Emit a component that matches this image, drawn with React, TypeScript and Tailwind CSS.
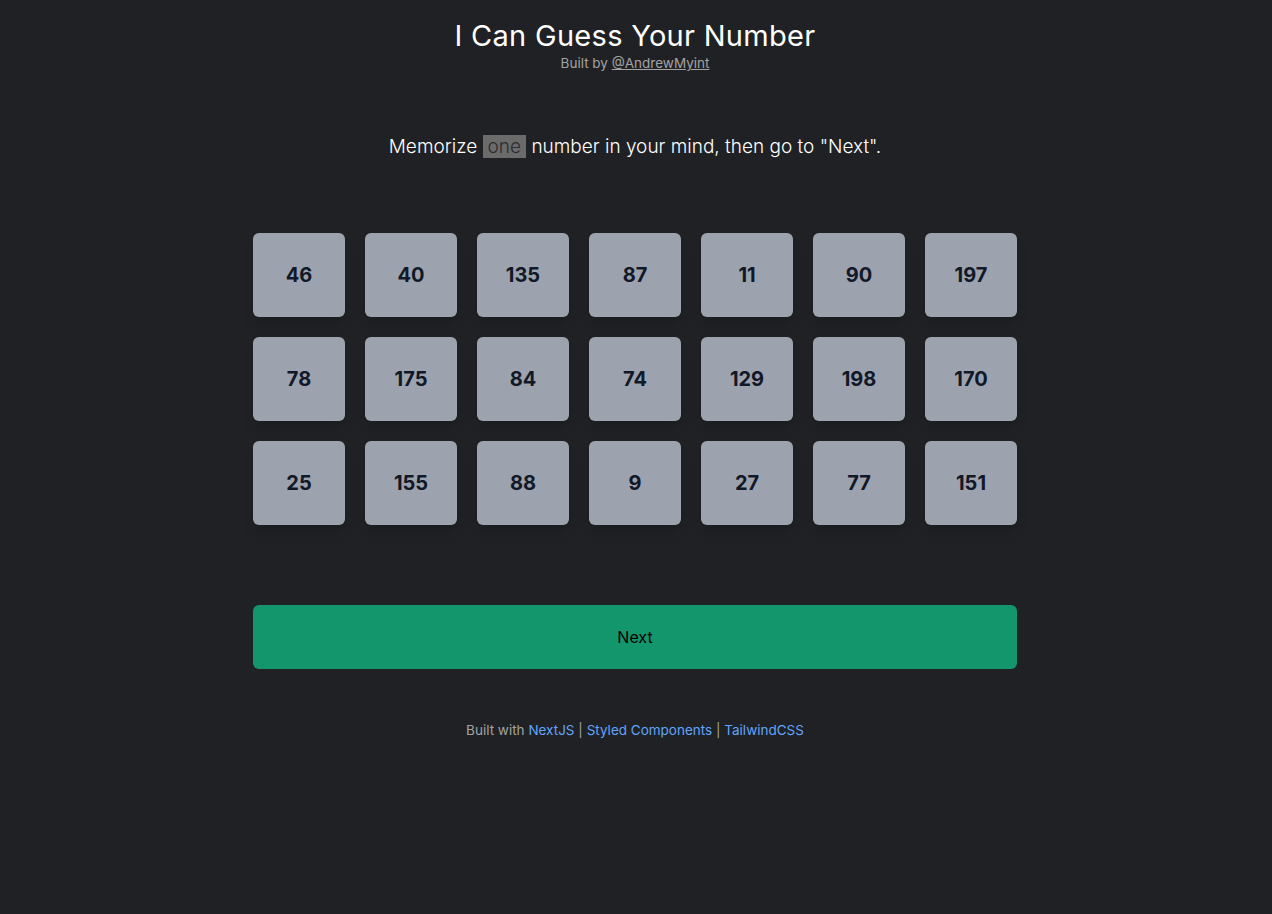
import React from "react";

const rows = [
  [46, 40, 135, 87, 11, 90, 197],
  [78, 175, 84, 74, 129, 198, 170],
  [25, 155, 88, 9, 27, 77, 151],
];

export default function App() {
  return (
    <div
      className="min-h-[914px] w-full bg-[#202124] text-white"
      style={{ fontFamily: "Inter, 'Noto Sans', sans-serif" }}
    >
      <div className="flex flex-col items-center pt-[18px] pr-[2px]">
        <h1 className="text-[29px] leading-[36px] tracking-[0.01em] font-normal text-white">
          I Can Guess Your Number
        </h1>
        <p className="text-[13.5px] leading-[16px] text-[#a3a3a3] mt-[1px]">
          Built by <span className="underline">@AndrewMyint</span>
        </p>
        <p className="mt-[63px] text-[19px] leading-[26px] font-light text-white">
          Memorize <span className="bg-[#6b6b6b] text-[#2c2c2c] px-[5px]">one</span> number in your mind, then go to "Next".
        </p>
        <div className="mt-[73px] grid grid-cols-7 gap-5">
          {rows.flat().map((n, i) => (
            <div
              key={i}
              className="w-[92px] h-[84px] rounded-md bg-[#9ca3af] flex items-center justify-center text-[20px] font-bold text-[#111827] shadow-lg"
            >
              {n}
            </div>
          ))}
        </div>
        <button className="mt-[80px] w-[764px] h-[64px] rounded-md bg-[#14966c] text-black text-[16px]">
          Next
        </button>
        <p className="mt-[51px] text-[13.5px] text-[#a3a3a3]">
          Built with <span className="text-[#60a5fa]">NextJS</span> |{" "}
          <span className="text-[#60a5fa]">Styled Components</span> |{" "}
          <span className="text-[#60a5fa]">TailwindCSS</span>
        </p>
      </div>
    </div>
  );
}
